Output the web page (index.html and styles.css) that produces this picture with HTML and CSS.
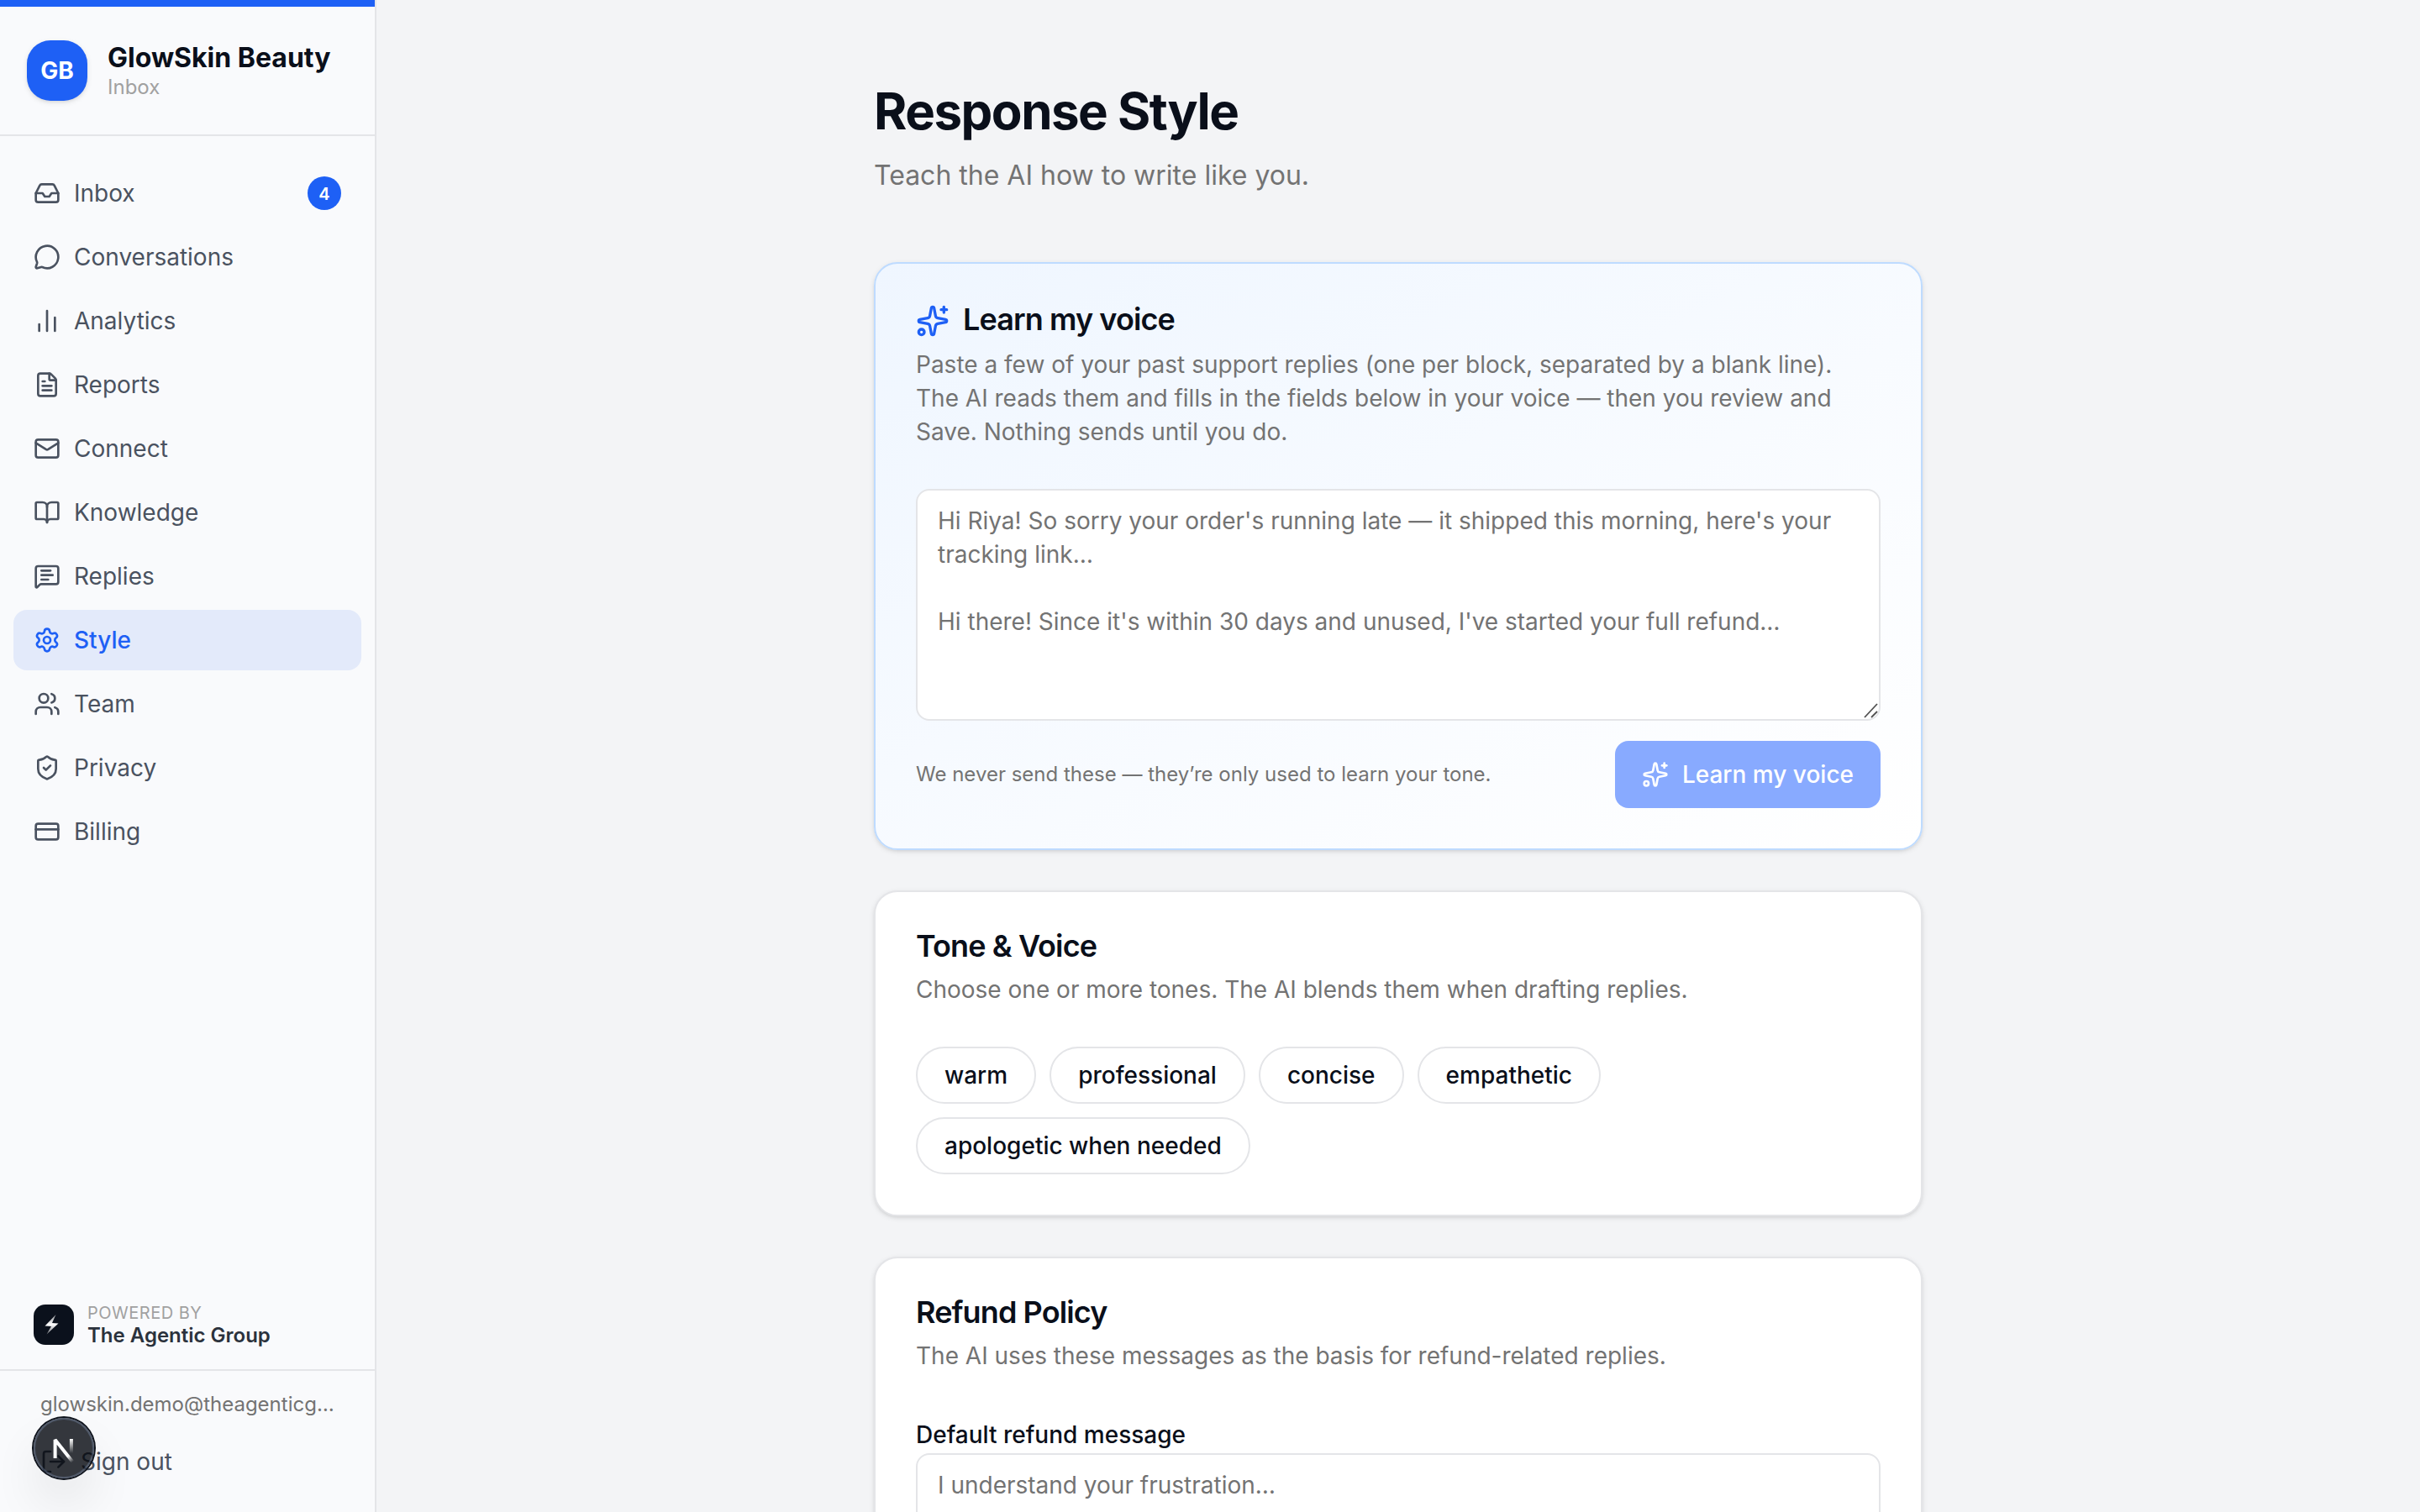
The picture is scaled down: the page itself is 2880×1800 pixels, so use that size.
FILE: index.html
```html
<!DOCTYPE html>
<html lang="en">
<head>
    <meta charset="UTF-8">
    <meta name="viewport" content="width=device-width, initial-scale=1.0">
    <title>Response Style - GlowSkin Beauty</title>
    <link rel="stylesheet" href="styles.css">
</head>
<body>
    <div class="app">
        <aside class="sidebar">
            <div class="brand-bar"></div>
            <div class="brand">
                <div class="brand-logo">GB</div>
                <div class="brand-text">
                    <div class="brand-name">GlowSkin Beauty</div>
                    <div class="brand-sub">Inbox</div>
                </div>
            </div>

            <nav class="nav">
                <a class="nav-item" href="#">
                    <svg class="icon" viewBox="0 0 24 24"><polyline points="22 12 16 12 14 15 10 15 8 12 2 12"/><path d="M5.45 5.11 2 12v6a2 2 0 0 0 2 2h16a2 2 0 0 0 2-2v-6l-3.45-6.89A2 2 0 0 0 16.76 4H7.24a2 2 0 0 0-1.79 1.11z"/></svg>
                    <span>Inbox</span>
                    <span class="badge">4</span>
                </a>
                <a class="nav-item" href="#">
                    <svg class="icon" viewBox="0 0 24 24"><path d="M2.992 16.342a2 2 0 0 1 .094 1.167l-1.065 3.29a1 1 0 0 0 1.236 1.168l3.413-.998a2 2 0 0 1 1.099.092 10 10 0 1 0-4.777-4.719"/></svg>
                    <span>Conversations</span>
                </a>
                <a class="nav-item" href="#">
                    <svg class="icon" viewBox="0 0 24 24"><path d="M5 21v-6"/><path d="M12 21V3"/><path d="M19 21V9"/></svg>
                    <span>Analytics</span>
                </a>
                <a class="nav-item" href="#">
                    <svg class="icon" viewBox="0 0 24 24"><path d="M6 22a2 2 0 0 1-2-2V4a2 2 0 0 1 2-2h8a2.4 2.4 0 0 1 1.704.706l3.588 3.588A2.4 2.4 0 0 1 20 8v12a2 2 0 0 1-2 2z"/><path d="M14 2v5a1 1 0 0 0 1 1h5"/><path d="M10 9H8"/><path d="M16 13H8"/><path d="M16 17H8"/></svg>
                    <span>Reports</span>
                </a>
                <a class="nav-item" href="#">
                    <svg class="icon" viewBox="0 0 24 24"><path d="m22 7-8.991 5.727a2 2 0 0 1-2.009 0L2 7"/><rect x="2" y="4" width="20" height="16" rx="2"/></svg>
                    <span>Connect</span>
                </a>
                <a class="nav-item" href="#">
                    <svg class="icon" viewBox="0 0 24 24"><path d="M12 7v14"/><path d="M3 18a1 1 0 0 1-1-1V4a1 1 0 0 1 1-1h5a4 4 0 0 1 4 4 4 4 0 0 1 4-4h5a1 1 0 0 1 1 1v13a1 1 0 0 1-1 1h-6a3 3 0 0 0-3 3 3 3 0 0 0-3-3z"/></svg>
                    <span>Knowledge</span>
                </a>
                <a class="nav-item" href="#">
                    <svg class="icon" viewBox="0 0 24 24"><path d="M22 17a2 2 0 0 1-2 2H6.828a2 2 0 0 0-1.414.586l-2.202 2.202A.71.71 0 0 1 2 21.286V5a2 2 0 0 1 2-2h16a2 2 0 0 1 2 2z"/><path d="M7 11h10"/><path d="M7 15h6"/><path d="M7 7h8"/></svg>
                    <span>Replies</span>
                </a>
                <a class="nav-item active" href="#">
                    <svg class="icon" viewBox="0 0 24 24"><path d="M9.671 4.136a2.34 2.34 0 0 1 4.659 0 2.34 2.34 0 0 0 3.319 1.915 2.34 2.34 0 0 1 2.33 4.033 2.34 2.34 0 0 0 0 3.831 2.34 2.34 0 0 1-2.33 4.033 2.34 2.34 0 0 0-3.319 1.915 2.34 2.34 0 0 1-4.659 0 2.34 2.34 0 0 0-3.32-1.915 2.34 2.34 0 0 1-2.33-4.033 2.34 2.34 0 0 0 0-3.831A2.34 2.34 0 0 1 6.35 6.051a2.34 2.34 0 0 0 3.319-1.915"/><circle cx="12" cy="12" r="3"/></svg>
                    <span>Style</span>
                </a>
                <a class="nav-item" href="#">
                    <svg class="icon" viewBox="0 0 24 24"><path d="M16 21v-2a4 4 0 0 0-4-4H6a4 4 0 0 0-4 4v2"/><path d="M16 3.128a4 4 0 0 1 0 7.744"/><path d="M22 21v-2a4 4 0 0 0-3-3.87"/><circle cx="9" cy="7" r="4"/></svg>
                    <span>Team</span>
                </a>
                <a class="nav-item" href="#">
                    <svg class="icon" viewBox="0 0 24 24"><path d="M20 13c0 5-3.5 7.5-7.66 8.95a1 1 0 0 1-.67-.01C7.5 20.5 4 18 4 13V6a1 1 0 0 1 1-1c2 0 4.5-1.2 6.24-2.72a1.17 1.17 0 0 1 1.52 0C14.51 3.81 17 5 19 5a1 1 0 0 1 1 1z"/><path d="m9 12 2 2 4-4"/></svg>
                    <span>Privacy</span>
                </a>
                <a class="nav-item" href="#">
                    <svg class="icon" viewBox="0 0 24 24"><rect x="2" y="5" width="20" height="14" rx="2"/><path d="M2 10h20"/></svg>
                    <span>Billing</span>
                </a>
            </nav>

            <div class="powered">
                <svg class="powered-logo" viewBox="0 0 48 48">
                    <defs>
                        <linearGradient id="bolt" x1="0" y1="0" x2="0" y2="1">
                            <stop offset="0" stop-color="#8b8d92"/>
                            <stop offset="0.5" stop-color="#ffffff"/>
                            <stop offset="1" stop-color="#6b6e75"/>
                        </linearGradient>
                    </defs>
                    <rect width="48" height="48" rx="14" fill="#0b111c"/>
                    <path d="M26.5 12 L13.5 25.5 L21 26 L15.5 35.5 L29.5 22.5 L22 22 Z" fill="url(#bolt)"/>
                </svg>
                <div>
                    <div class="powered-label">POWERED BY</div>
                    <div class="powered-name">The Agentic Group</div>
                </div>
            </div>

            <div class="account">
                <div class="account-email">glowskin.demo@theagenticg…</div>
                <a class="nav-item" href="#">
                    <svg class="icon" viewBox="0 0 24 24"><path d="m16 17 5-5-5-5"/><path d="M21 12H9"/><path d="M9 21H5a2 2 0 0 1-2-2V5a2 2 0 0 1 2-2h4"/></svg>
                    <span>Sign out</span>
                </a>
            </div>
        </aside>

        <main class="main">
            <div class="content">
                <header class="page-header">
                    <h1>Response Style</h1>
                    <p>Teach the AI how to write like you.</p>
                </header>

                <section class="card card-voice">
                    <h2>
                        <svg class="icon icon-title" viewBox="0 0 24 24"><path d="M11.017 2.814a1 1 0 0 1 1.966 0l1.051 5.558a2 2 0 0 0 1.594 1.594l5.558 1.051a1 1 0 0 1 0 1.966l-5.558 1.051a2 2 0 0 0-1.594 1.594l-1.051 5.558a1 1 0 0 1-1.966 0l-1.051-5.558a2 2 0 0 0-1.594-1.594l-5.558-1.051a1 1 0 0 1 0-1.966l5.558-1.051a2 2 0 0 0 1.594-1.594z"/><path d="M20 2v4"/><path d="M22 4h-4"/><circle cx="4" cy="20" r="2"/></svg>
                        <span>Learn my voice</span>
                    </h2>
                    <p class="card-desc">Paste a few of your past support replies (one per block, separated by a blank line). The AI reads them and fills in the fields below in your voice — then you review and Save. Nothing sends until you do.</p>
                    <div class="field-wrap">
                        <textarea class="field" rows="6" placeholder="Hi Riya! So sorry your order's running late — it shipped this morning, here's your tracking link…&#10;&#10;Hi there! Since it's within 30 days and unused, I've started your full refund…"></textarea>
                        <svg class="grip" viewBox="0 0 18 18"><path d="M1 17 16 1"/><path d="M9 17 16 10"/></svg>
                    </div>
                    <div class="card-actions">
                        <span class="note">We never send these — they’re only used to learn your tone.</span>
                        <button class="btn" disabled>
                            <svg class="icon" viewBox="0 0 24 24"><path d="M11.017 2.814a1 1 0 0 1 1.966 0l1.051 5.558a2 2 0 0 0 1.594 1.594l5.558 1.051a1 1 0 0 1 0 1.966l-5.558 1.051a2 2 0 0 0-1.594 1.594l-1.051 5.558a1 1 0 0 1-1.966 0l-1.051-5.558a2 2 0 0 0-1.594-1.594l-5.558-1.051a1 1 0 0 1 0-1.966l5.558-1.051a2 2 0 0 0 1.594-1.594z"/><path d="M20 2v4"/><path d="M22 4h-4"/><circle cx="4" cy="20" r="2"/></svg>
                            Learn my voice
                        </button>
                    </div>
                </section>

                <section class="card">
                    <h2><span>Tone &amp; Voice</span></h2>
                    <p class="card-desc">Choose one or more tones. The AI blends them when drafting replies.</p>
                    <div class="chips">
                        <button class="chip">warm</button>
                        <button class="chip">professional</button>
                        <button class="chip">concise</button>
                        <button class="chip">empathetic</button>
                        <button class="chip">apologetic when needed</button>
                    </div>
                </section>

                <section class="card">
                    <h2><span>Refund Policy</span></h2>
                    <p class="card-desc">The AI uses these messages as the basis for refund-related replies.</p>
                    <div class="form-row">
                        <label for="refund">Default refund message</label>
                        <textarea class="field" id="refund" rows="4" placeholder="I understand your frustration…"></textarea>
                    </div>
                </section>
            </div>
        </main>
    </div>

    <div class="dev-badge">
        <svg viewBox="0 0 72 72">
            <defs>
                <linearGradient id="n0" gradientUnits="userSpaceOnUse" x1="38" y1="40" x2="47" y2="52">
                    <stop offset="0" stop-color="#fff"/>
                    <stop offset="0.4" stop-color="#fff"/>
                    <stop offset="1" stop-color="#fff" stop-opacity="0"/>
                </linearGradient>
                <linearGradient id="n1" gradientUnits="userSpaceOnUse" x1="0" y1="25" x2="0" y2="42">
                    <stop offset="0" stop-color="#fff"/>
                    <stop offset="1" stop-color="#fff" stop-opacity="0"/>
                </linearGradient>
            </defs>
            <path d="M47 53 L25.6 26 V48" fill="none" stroke="url(#n0)" stroke-width="4" stroke-linejoin="bevel"/>
            <path d="M44.9 25 V47" fill="none" stroke="url(#n1)" stroke-width="4"/>
        </svg>
    </div>
</body>
</html>
```
FILE: styles.css
```css
* { box-sizing: border-box; }
body { margin: 0; font-family: Inter, "Liberation Sans", sans-serif; font-size: 32px; line-height: 48px; color: #0a0f1a; background-color: #f3f4f6; }
h1, h2, p { margin: 0; }
a { color: inherit; text-decoration: none; }
button, textarea { font-family: inherit; }

.app { display: flex; height: 1800px; overflow: hidden; }

/* sidebar */
.sidebar { display: flex; flex-direction: column; width: 448px; flex-shrink: 0; background-color: #f9fafc; border-right: 2px solid #e4e5e8; }
.brand-bar { height: 8px; background-color: #1e60f5; }
.brand { display: flex; align-items: center; gap: 24px; height: 154px; padding: 0 32px; border-bottom: 2px solid #e4e5e8; }
.brand-logo { display: flex; align-items: center; justify-content: center; width: 72px; height: 72px; border-radius: 28px; background-color: #1e60f5; color: #fff; font-size: 28px; font-weight: 700; box-shadow: 0 2px 6px rgba(0,0,0,0.1), 0 2px 4px -2px rgba(0,0,0,0.1); }
.brand-name { padding-top: 1px; font-size: 32px; line-height: 40px; font-weight: 700; white-space: nowrap; }
.brand-sub { margin-top: -1px; font-size: 24px; line-height: 32px; color: #a1a1a1; }

.nav { display: flex; flex-direction: column; gap: 4px; flex: 1; padding: 32px 16px; }
.nav-item { display: flex; align-items: center; gap: 16px; height: 72px; padding: 0 24px; border-radius: 16px; font-size: 28px; line-height: 40px; color: #4a5260; }
.nav-item.active { background-color: #e3eafa; color: #1e60f5; font-weight: 500; }
.icon { width: 32px; height: 32px; flex-shrink: 0; fill: none; stroke: currentColor; stroke-width: 2; stroke-linecap: round; stroke-linejoin: round; }
.badge { display: flex; align-items: center; justify-content: center; width: 40px; height: 40px; margin-left: auto; padding-top: 1px; border-radius: 20px; background-color: #1e60f5; color: #fff; font-size: 20px; font-weight: 600; }

.powered { display: flex; align-items: center; gap: 16px; padding: 0 40px 26px; }
.powered-logo { width: 48px; height: 48px; }
.powered-label { padding-top: 1px; font-size: 20px; line-height: 25px; letter-spacing: 0.5px; color: #a1a1a1; }
.powered-name { font-size: 24px; line-height: 28px; font-weight: 600; color: #2b323c; }
.account { padding: 24px; border-top: 2px solid #e4e5e8; }
.account-email { margin-bottom: 16px; padding-left: 24px; font-size: 24px; line-height: 32px; color: #737373; white-space: nowrap; }

/* content */
.main { flex: 1; display: flex; justify-content: center; }
.content { width: 1248px; padding-top: 96px; display: flex; flex-direction: column; gap: 48px; }
.page-header { margin-bottom: 31px; }
.page-header h1 { font-size: 60px; line-height: 72px; font-weight: 700; letter-spacing: -1.5px; }
.page-header p { margin-top: 17px; color: #737373; }

.card { flex-shrink: 0; padding: 48px; background-color: #fff; border: 2px solid #e4e5e8; border-radius: 28px; box-shadow: 0 2px 6px rgba(0,0,0,0.1), 0 2px 4px -2px rgba(0,0,0,0.1); }
.card-voice { background: linear-gradient(to bottom right, #eff6ff, #fff); border-color: #bedbff; }
.card h2 { display: flex; align-items: center; gap: 16px; font-size: 36px; line-height: 36px; font-weight: 600; letter-spacing: -0.9px; }
.card h2 span { margin-top: -2px; padding-bottom: 2px; }
.icon-title { width: 40px; height: 40px; color: #1e60f5; }
.card-desc { margin-top: 12px; margin-bottom: 48px; font-size: 28px; line-height: 40px; color: #737373; }

.field-wrap { position: relative; }
.field { display: block; width: 100%; padding: 16px 24px; border: 2px solid #e4e5e8; border-radius: 16px; background-color: #fff; font-size: 28px; line-height: 40px; resize: none; }
.field::placeholder { color: #737373; opacity: 1; }
.grip { position: absolute; right: 2px; bottom: 3px; width: 18px; height: 18px; fill: none; stroke: #505050; stroke-width: 1.8; }

.card-actions { display: flex; align-items: center; justify-content: space-between; margin-top: 24px; }
.note { font-size: 24px; line-height: 32px; color: #737373; }
.btn { display: flex; align-items: center; gap: 16px; height: 80px; padding: 0 32px; border: none; border-radius: 16px; background-color: #88aaff; color: #fff; font-size: 28px; font-weight: 500; }

.chips { display: flex; flex-wrap: wrap; gap: 16px; width: 900px; }
.chip { height: 68px; padding: 0 32px; border: 2px solid #e4e5e8; border-radius: 34px; background-color: #fff; color: inherit; font-size: 28px; font-weight: 500; }
.form-row label { display: block; height: 48px; padding-top: 6px; font-size: 28px; line-height: 40px; font-weight: 500; }

/* floating dev tools button */
.dev-badge { position: fixed; left: 40px; bottom: 40px; width: 72px; height: 72px; border-radius: 50%; background-color: rgba(2,6,12,0.8); box-shadow: 0 0 0 2px #0e131c, inset 0 0 0 2px rgba(130,150,185,0.35), 0 32px 64px -16px rgba(0,0,0,0.24); }
.dev-badge svg { display: block; width: 72px; height: 72px; }
```
